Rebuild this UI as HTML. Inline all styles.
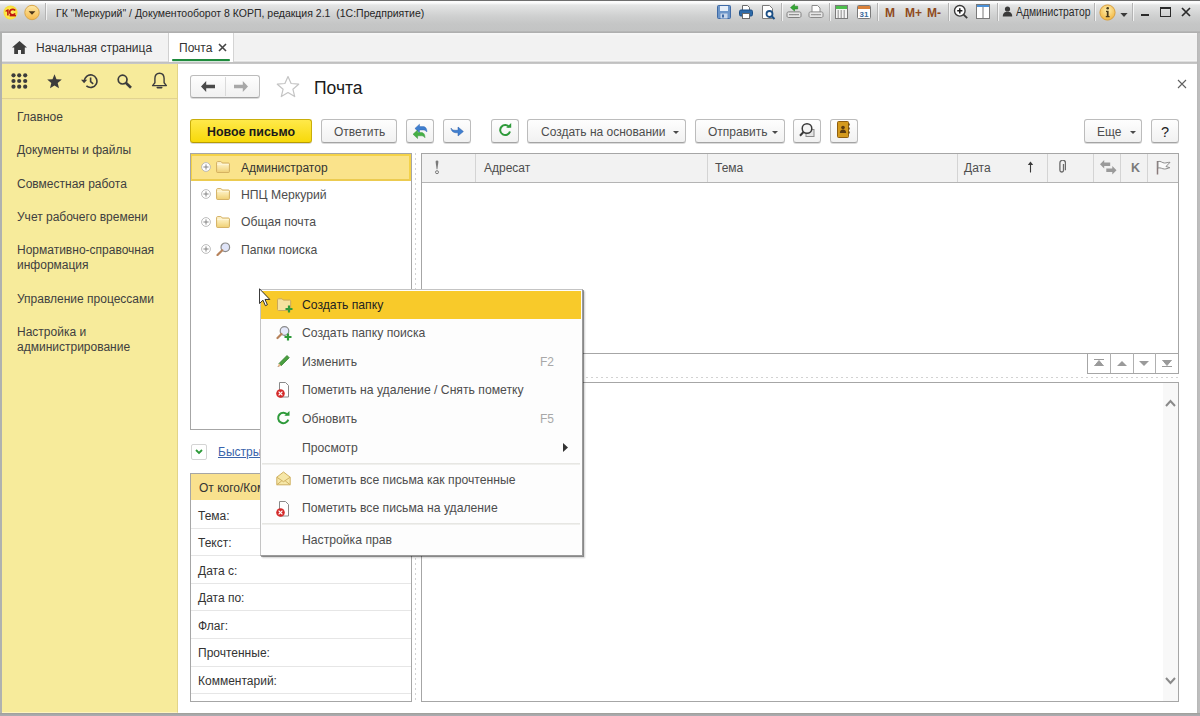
<!DOCTYPE html>
<html><head><meta charset="utf-8">
<style>
*{margin:0;padding:0;box-sizing:border-box}
html,body{width:1200px;height:716px;overflow:hidden;background:#fff}
body{position:relative;font-family:"Liberation Sans",sans-serif;font-size:12px;color:#4d4d4d}
.a{position:absolute}
.t{position:absolute;white-space:nowrap;line-height:14px}
/* title bar */
#tb{left:0;top:0;width:1200px;height:33px;background:linear-gradient(#6e6e6e 0,#6e6e6e 1px,#fcfcfc 1px,#fbfbfb 3px,#e4e5e5 5px,#cfd0d0 16px,#c5c6c6 24px,#c3c4c4 31px,#a9a9a9 32px,#b5b5b5 33px)}
#tabs{left:0;top:33px;width:1200px;height:31px;background:linear-gradient(#f8f8f8 0,#f2f2f2 3px,#f2f2f2 27px,#fafafa 28px,#c4c4c4 29px,#bdbdbd 30px,#d0d0d0 31px)}
.sep{position:absolute;width:1px;background:#b4b4b4;box-shadow:1px 0 0 rgba(255,255,255,.7)}
/* window borders */
#bl{left:0;top:33px;width:2px;height:683px;background:#b0b2b0}
#br{left:1197px;top:33px;width:3px;height:683px;background:linear-gradient(90deg,#b4b4b4,#bdbdbd 1px,#bebebe)}
#bb{left:0;top:713px;width:1200px;height:3px;background:linear-gradient(#9c9c94 0,#a6a6a6 1px,#acacb2 3px)}
/* left panel */
#lp{left:2px;top:64px;width:176px;height:649px;background:#f7eb9b;border-right:1px solid #e2d488;border-bottom:1px solid #fff4c0}
#lp .t{color:#404040;font-size:12px}
/* buttons */
.btn{position:absolute;height:24px;border:1px solid #bcbcbc;border-bottom-color:#a4a4a4;border-radius:3px;background:linear-gradient(#fefefe,#f1f1f1);box-shadow:0 1px 0 rgba(0,0,0,.14)}
.btn .t{color:#4d4d4d;line-height:23px}
.grid{position:absolute;border:1px solid #a6a6a6}
.dotv{position:absolute;width:1px;background:repeating-linear-gradient(#d2d2d2 0 2px,transparent 2px 5px)}
.doth{position:absolute;height:1px;background:repeating-linear-gradient(90deg,#d2d2d2 0 2px,transparent 2px 5px)}
.menu .t{color:#4d4d4d}
</style></head><body>

<!-- TITLE BAR -->
<div id="tb" class="a"></div>
<div id="tabs" class="a"></div>
<div id="bl" class="a"></div>
<div id="br" class="a"></div>
<div id="bb" class="a"></div>


<!-- title bar content -->
<svg class="a" style="left:3px;top:5px" width="16" height="16" viewBox="0 0 16 16">
 <defs><radialGradient id="g1c" cx="50%" cy="55%" r="55%"><stop offset="0" stop-color="#fff27a"/><stop offset=".7" stop-color="#fde640"/><stop offset="1" stop-color="#f6d820" stop-opacity=".85"/></radialGradient></defs>
 <circle cx="7.5" cy="7.5" r="7" fill="url(#g1c)"/>
 <path d="M2.6 5.4l2.2-1.2h.9v6.2H4.1V6.3l-1.5.6z" fill="#c01a10"/>
 <path d="M12.2 5.6a3 2.8 0 1 0 0 3" fill="none" stroke="#c01a10" stroke-width="1.7"/>
 <rect x="6.6" y="10" width="6.4" height="1.4" fill="#c01a10"/>
</svg>
<svg class="a" style="left:24px;top:4px" width="16" height="17" viewBox="0 0 16 17">
 <defs><linearGradient id="gdd" x1="0" y1="0" x2="0" y2="1"><stop offset="0" stop-color="#fde9a8"/><stop offset="1" stop-color="#f6b94a"/></linearGradient></defs>
 <circle cx="8" cy="8.5" r="7.2" fill="url(#gdd)" stroke="#d9a64a" stroke-width="1"/>
 <path d="M4.6 7.2h6.8l-3.4 3.6z" fill="#4a3418"/>
</svg>
<div class="sep" style="left:45px;top:3px;height:17px"></div>
<div class="t" id="wtitle" style="left:56px;top:5.5px;font-size:11.5px;color:#262626;transform-origin:0 0;transform:scaleX(.913)">ГК "Меркурий" / Документооборот 8 КОРП, редакция 2.1&nbsp; (1С:Предприятие)</div>

<!-- toolbar icons -->
<svg class="a" style="left:717px;top:5px" width="14" height="14" viewBox="0 0 14 14">
 <rect x=".5" y=".5" width="13" height="13" rx="1" fill="#6c95c8" stroke="#3f6aa6"/>
 <rect x="3" y="1" width="8" height="5" fill="#e6eef8"/>
 <rect x="3.5" y="8.5" width="7" height="5" fill="#c7d6ea"/>
 <rect x="5" y="9.5" width="2" height="3" fill="#3f6aa6"/>
</svg>
<svg class="a" style="left:739px;top:5px" width="14" height="14" viewBox="0 0 14 14">
 <path d="M3.5 .5h5l2 2v3h-7z" fill="#fff" stroke="#6a6a6a"/>
 <rect x=".5" y="5" width="13" height="6" rx="1.5" fill="#2e6aa8" stroke="#1d4f86"/>
 <rect x="3.5" y="8.5" width="7" height="5" fill="#fff" stroke="#6a6a6a"/>
</svg>
<svg class="a" style="left:762px;top:5px" width="14" height="15" viewBox="0 0 14 15">
 <path d="M.5 .5h7l3 3v10H.5z" fill="#fff" stroke="#7a7a7a"/>
 <circle cx="7.5" cy="9" r="3" fill="none" stroke="#1b4f86" stroke-width="1.8"/>
 <path d="M9.5 11l3 3" stroke="#1b4f86" stroke-width="2"/>
</svg>
<div class="sep" style="left:781px;top:3px;height:18px"></div>
<svg class="a" style="left:786px;top:3px" width="16" height="16" viewBox="0 0 16 16">
 <path d="M1 10.5c0-1 .6-1.6 1.6-1.6h10.8c1 0 1.6.6 1.6 1.6v2.4c0 1-.6 1.6-1.6 1.6H2.6c-1 0-1.6-.6-1.6-1.6z" fill="#e6e6e6" stroke="#7f7f7f"/>
 <path d="M3 11.7h3.2M9.8 11.7H13M6 11.7h4" stroke="#7f7f7f" stroke-width="1"/>
 <path d="M4.5 4.6L8.5 1.2v2h3.2v2.8H8.5v2z" fill="#34a834" stroke="#1f7a1f" stroke-width=".5"/>
</svg>
<svg class="a" style="left:808px;top:3px" width="16" height="16" viewBox="0 0 16 16">
 <path d="M4 2.5h5.5l2.5 2.5v4.5H4z" fill="#fff" stroke="#8a8a8a"/>
 <path d="M1 10.5c0-1 .6-1.6 1.6-1.6h10.8c1 0 1.6.6 1.6 1.6v2.4c0 1-.6 1.6-1.6 1.6H2.6c-1 0-1.6-.6-1.6-1.6z" fill="#e6e6e6" stroke="#8a8a8a"/>
 <path d="M3 11.7h3.2M9.8 11.7H13M6 11.7h4" stroke="#8a8a8a" stroke-width="1"/>
</svg>
<div class="sep" style="left:829px;top:3px;height:18px"></div>
<svg class="a" style="left:835px;top:5px" width="13" height="14" viewBox="0 0 13 14">
 <rect x=".5" y=".5" width="12" height="13" fill="#f4f4f4" stroke="#7a7a7a"/>
 <rect x="1" y="1" width="11" height="3" fill="#4dbf4d"/>
 <path d="M2.5 6h1.5M5.5 6h1.5M8.5 6h1.5M2.5 8h1.5M5.5 8h1.5M8.5 8h1.5M2.5 10h1.5M5.5 10h1.5M8.5 10h1.5M2.5 12h1.5M5.5 12h1.5M8.5 12h1.5" stroke="#6a6a6a"/>
</svg>
<svg class="a" style="left:857px;top:4px" width="14" height="15" viewBox="0 0 14 15">
 <rect x=".5" y="1.5" width="13" height="13" rx="1" fill="#fff" stroke="#7a7a7a"/>
 <rect x="1" y="2" width="12" height="3" fill="#d9813a"/>
 <text x="7" y="13" font-family="Liberation Sans" font-size="8" text-anchor="middle" fill="#3d6a9a" font-weight="bold">31</text>
</svg>
<div class="sep" style="left:877px;top:3px;height:18px"></div>
<div class="t" style="left:885px;top:6px;font-size:12px;font-weight:bold;color:#8f4a1c">M</div>
<div class="t" style="left:905px;top:6px;font-size:12px;font-weight:bold;color:#8f4a1c">M+</div>
<div class="t" style="font-size:12.2px;left:927px;top:6px;font-size:12px;font-weight:bold;color:#8f4a1c">M-</div>
<div class="sep" style="left:948px;top:3px;height:18px"></div>
<svg class="a" style="left:953px;top:4px" width="16" height="16" viewBox="0 0 16 16">
 <circle cx="6.8" cy="6.8" r="5.3" fill="#fff" stroke="#3a3a3a" stroke-width="1.4"/>
 <path d="M4.2 6.8h5.2M6.8 4.2v5.2" stroke="#1a1a1a" stroke-width="1.5"/>
 <path d="M10.6 10.6l3.6 3.6" stroke="#3a3a3a" stroke-width="1.8"/>
</svg>
<svg class="a" style="left:976px;top:4px" width="14" height="15" viewBox="0 0 14 15">
 <rect x=".5" y=".5" width="13" height="14" fill="#fff" stroke="#7a7a7a"/>
 <rect x="1" y="1" width="12" height="2" fill="#4a90d8"/>
 <path d="M7 3v11.5" stroke="#7a7a7a"/>
</svg>
<div class="sep" style="left:997px;top:3px;height:18px"></div>
<svg class="a" style="left:1002px;top:6px" width="11" height="11" viewBox="0 0 11 11">
 <circle cx="5.5" cy="3" r="2.6" fill="#3a3a3a"/>
 <path d="M.8 10.5c0-3.6 2-4.8 4.7-4.8s4.7 1.2 4.7 4.8z" fill="#3a3a3a"/>
</svg>
<div class="t" id="admin" style="left:1016px;top:5px;font-size:12px;color:#2a2a2a;transform-origin:0 0;transform:scaleX(.86)">Администратор</div>
<div class="sep" style="left:1094px;top:3px;height:18px"></div>
<svg class="a" style="left:1099px;top:4px" width="17" height="17" viewBox="0 0 17 17">
 <defs><radialGradient id="ginf" cx="50%" cy="35%" r="65%"><stop offset="0" stop-color="#fff0b0"/><stop offset="1" stop-color="#f2b640"/></radialGradient></defs>
 <circle cx="8.5" cy="8.5" r="7.6" fill="url(#ginf)" stroke="#d9a040"/>
 <circle cx="8.7" cy="4.3" r="1.3" fill="#4a3a1a"/>
 <path d="M7 6.8h2.6v5.2h1v1.2H6.8V12h1V8H7z" fill="#4a3a1a"/>
</svg>
<svg class="a" style="left:1120px;top:13px" width="8" height="4" viewBox="0 0 9 5"><path d="M0 0h9L4.5 5z" fill="#3a3a3a"/></svg>
<div class="sep" style="left:1132px;top:3px;height:18px"></div>
<div class="a" style="left:1141px;top:14px;width:8px;height:2px;background:#2a2a2a"></div>
<div class="a" style="left:1160px;top:7px;width:11px;height:10px;border:1.5px solid #2a2a2a;border-top-width:2px"></div>
<svg class="a" style="left:1181px;top:7px" width="10" height="10" viewBox="0 0 10 10"><path d="M1 1l8 8M9 1l-8 8" stroke="#2a2a2a" stroke-width="1.7"/></svg>

<!-- tabs -->
<svg class="a" style="left:12px;top:41px" width="15" height="13" viewBox="0 0 15 13">
 <path d="M7.5 0L0 6.5h2.2V13h3.8V9h3v4h3.8V6.5H15z" fill="#3e3e3e"/>
</svg>
<div class="t" style="left:36px;top:41px;color:#333">Начальная страница</div>
<div class="a" style="left:168px;top:33px;width:1px;height:29px;background:#d0d0d0"></div>
<div class="a" style="left:169px;top:33px;width:65px;height:29px;background:#fff;border-right:1px solid #d4d4d4"></div>
<div class="a" style="left:172px;top:59px;width:58px;height:2px;background:#1e8a3c;border-radius:1px;box-shadow:0 .5px 0 rgba(30,138,60,.4)"></div>
<div class="t" style="left:179px;top:41px;color:#333">Почта</div>
<svg class="a" style="left:218px;top:43px" width="9" height="9" viewBox="0 0 9 9"><path d="M1 1l7 7M8 1l-7 7" stroke="#444" stroke-width="1.6"/></svg>

<!-- LEFT PANEL -->
<div id="lp" class="a"></div>
<div id="lpc" style="position:absolute;left:0;top:0;color:#404040">
<!-- left panel icons -->
<svg class="a" style="left:11px;top:73px" width="17" height="16" viewBox="0 0 17 16" fill="#3c3c3c">
 <circle cx="2.5" cy="2.3" r="2.1"/><circle cx="8.2" cy="2.3" r="2.1"/><circle cx="14.2" cy="2.3" r="2.1"/>
 <circle cx="2.5" cy="8" r="2.1"/><circle cx="8.2" cy="8" r="2.1"/><circle cx="14.2" cy="8" r="2.1"/>
 <circle cx="2.5" cy="13.7" r="2.1"/><circle cx="8.2" cy="13.7" r="2.1"/><circle cx="14.2" cy="13.7" r="2.1"/>
</svg>
<svg class="a" style="left:47px;top:74px" width="15" height="15" viewBox="0 0 15 15">
 <path d="M7.5 .3l2 4.9 5.3.4-4.1 3.4 1.3 5.2-4.5-2.8-4.5 2.8 1.3-5.2L.2 5.6l5.3-.4z" fill="#3c3c3c"/>
</svg>
<svg class="a" style="left:80px;top:73px" width="18" height="16" viewBox="0 0 18 16">
 <path d="M4.3 8.3A6.3 6.3 0 1 1 6.4 12.9" fill="none" stroke="#3c3c3c" stroke-width="1.6"/>
 <path d="M1 6.8h6.2L4.1 10.3z" fill="#3c3c3c"/>
 <path d="M10.6 4.6v4l2.6 2.2" fill="none" stroke="#3c3c3c" stroke-width="1.6"/>
</svg>
<svg class="a" style="left:117px;top:74px" width="16" height="15" viewBox="0 0 16 15">
 <circle cx="5.6" cy="5.6" r="4.4" fill="none" stroke="#3c3c3c" stroke-width="1.7"/>
 <path d="M8.8 8.8l5.2 5" stroke="#3c3c3c" stroke-width="2.6"/>
</svg>
<svg class="a" style="left:151px;top:72px" width="17" height="18" viewBox="0 0 17 18">
 <path d="M8.5 1.2c-3.2 0-4.6 2.4-4.6 5.4v4.2L1.6 13.6h13.8l-2.3-2.8V6.6c0-3-1.4-5.4-4.6-5.4z" fill="none" stroke="#3c3c3c" stroke-width="1.4" stroke-linejoin="round"/>
 <path d="M6.3 15.6h4.4" stroke="#3c3c3c" stroke-width="1.6" stroke-linecap="round"/>
</svg>
<div class="a" style="left:2px;top:98px;width:175px;height:2px;background:linear-gradient(#d9ca84,#fbf0b4)"></div>
<div class="t" style="left:17px;top:110px">Главное</div>
<div class="t" style="left:17px;top:143px">Документы и файлы</div>
<div class="t" style="left:17px;top:177px">Совместная работа</div>
<div class="t" style="left:17px;top:210px">Учет рабочего времени</div>
<div class="t" style="left:17px;top:243px">Нормативно-справочная</div>
<div class="t" style="left:17px;top:258px">информация</div>
<div class="t" style="left:17px;top:292px">Управление процессами</div>
<div class="t" style="left:17px;top:325px">Настройка и</div>
<div class="t" style="left:17px;top:340px">администрирование</div>
</div>


<!-- MAIN HEADER -->
<div class="btn" style="left:190px;top:75px;width:70px;height:23px"></div>
<div class="a" style="left:225px;top:77px;width:1px;height:19px;background:#dadada"></div>
<svg class="a" style="left:201px;top:81px" width="14" height="11" viewBox="0 0 14 11"><path d="M0 5.5L5.2 0v3.8H14v3.4H5.2V11z" fill="#4a4a4a"/></svg>
<svg class="a" style="left:234px;top:81px" width="14" height="11" viewBox="0 0 14 11"><path d="M14 5.5L8.8 0v3.8H0v3.4h8.8V11z" fill="#a8a8a8"/></svg>
<svg class="a" style="left:276px;top:75px" width="24" height="23" viewBox="0 0 24 23">
 <path d="M12 1.5l3.1 7 7.6.7-5.8 5 1.8 7.4L12 17.6l-6.7 4 1.8-7.4-5.8-5 7.6-.7z" fill="none" stroke="#c4c4c4" stroke-width="1.2" stroke-linejoin="round"/>
</svg>
<div class="t" style="left:314px;top:78px;font-size:17.5px;line-height:21px;color:#1a1a1a">Почта</div>
<svg class="a" style="left:1177px;top:79px" width="10" height="10" viewBox="0 0 10 10"><path d="M1 1l8 8M9 1l-8 8" stroke="#606060" stroke-width="1.1"/></svg>

<!-- TOOLBAR -->
<div class="a" style="left:190px;top:119px;width:122px;height:24px;border:1px solid #c9ae0a;border-bottom-color:#b89c00;border-radius:3px;background:linear-gradient(#ffe94a,#f7d90a);box-shadow:0 1px 0 rgba(0,0,0,.15)"></div>
<div class="t" style="left:207px;top:125px;font-weight:bold;font-size:12.4px;color:#1a1a1a">Новое письмо</div>
<div class="btn" style="left:321px;top:119px;width:76px"></div>
<div class="t" style="left:334px;top:125px">Ответить</div>
<div class="btn" style="left:406px;top:119px;width:28px"></div>
<svg class="a" style="left:410px;top:121px" width="20" height="19" viewBox="0 0 20 19">
 <path transform="translate(4.9 3.2)" d="M0 4.2L4.6 0V2.4H8C10.5 2.4 12 4 12 7.8 11 6.4 9.8 5.8 8 5.8H4.6V8.6Z" fill="#3f7fd0" stroke="#2c5ea8" stroke-width=".4"/>
 <path transform="translate(3 9)" d="M0 4.2L4.6 0V2.4H8C10.5 2.4 12 4 12 7.8 11 6.4 9.8 5.8 8 5.8H4.6V8.6Z" fill="#45b045" stroke="#2a8a30" stroke-width=".4"/>
</svg>
<div class="btn" style="left:443px;top:119px;width:28px"></div>
<svg class="a" style="left:450px;top:126px" width="15" height="11" viewBox="0 0 15 11">
 <path d="M1 2C2 4.5 4 4.3 8 4.3V1L13.4 5.5 8 10V6.8C4.5 6.8 1.5 6.5 1 2Z" fill="#3f7fd0" stroke="#2c5ea8" stroke-width=".5"/>
</svg>
<div class="btn" style="left:491px;top:119px;width:28px"></div>
<svg class="a" style="left:498px;top:123px" width="14" height="14" viewBox="0 0 14 14">
 <path d="M11.3 4.2A5 5 0 1 0 12 8.5" fill="none" stroke="#2e9a3a" stroke-width="2"/>
 <path d="M8.2 4.8h5V0z" fill="#2e9a3a"/>
</svg>
<div class="btn" style="left:527px;top:119px;width:159px"></div>
<div class="t" style="left:541px;top:125px">Создать на основании</div>
<svg class="a" style="left:673px;top:131px" width="6" height="3" viewBox="0 0 6 3"><path d="M0 0h6L3 3z" fill="#4a4a4a"/></svg>
<div class="btn" style="left:695px;top:119px;width:90px"></div>
<div class="t" style="left:708px;top:125px">Отправить</div>
<svg class="a" style="left:772px;top:131px" width="6" height="3" viewBox="0 0 6 3"><path d="M0 0h6L3 3z" fill="#4a4a4a"/></svg>
<div class="btn" style="left:793px;top:119px;width:28px"></div>
<svg class="a" style="left:799px;top:122px" width="16" height="16" viewBox="0 0 16 16">
 <rect x="7" y="7.5" width="8" height="7" fill="#e4e4e4" stroke="#8a8a8a"/>
 <circle cx="8" cy="6.5" r="4.8" fill="#f4f4f4" stroke="#3a3a3a" stroke-width="1.5"/>
 <path d="M4.5 10l-3.5 3.8" stroke="#3a3a3a" stroke-width="2"/>
</svg>
<div class="btn" style="left:830px;top:119px;width:28px"></div>
<svg class="a" style="left:837px;top:121px" width="14" height="17" viewBox="0 0 14 17">
 <rect x=".5" y=".5" width="11" height="16" rx="1" fill="#d49a1e" stroke="#8f5f10"/>
 <path d="M12 2.5v2M12 6.5v2M12 10.5v2" stroke="#6a4a10" stroke-width="1.5"/>
 <circle cx="6" cy="6.5" r="1.8" fill="#5a3a10"/>
 <path d="M2.8 12c.3-2.4 1.5-3.4 3.2-3.4s2.9 1 3.2 3.4z" fill="#5a3a10"/>
</svg>
<div class="btn" style="left:1084px;top:119px;width:58px"></div>
<div class="t" style="left:1097px;top:125px">Еще</div>
<svg class="a" style="left:1130px;top:131px" width="6" height="3" viewBox="0 0 6 3"><path d="M0 0h6L3 3z" fill="#4a4a4a"/></svg>
<div class="btn" style="left:1151px;top:119px;width:28px"></div>
<div class="t" style="left:1161px;top:124px;font-size:14.5px;line-height:16px;color:#222">?</div>


<!-- TREE -->
<div class="a" style="left:190px;top:153px;width:222px;height:277px;border:1px solid #a6a6a6;background:#fff"></div>
<div class="a" style="left:191px;top:154px;width:220px;height:27px;background:#fae38b;border:2px solid #f4d248;border-left-width:1px;border-bottom-color:#eccb50"></div>
<svg width="0" height="0" style="position:absolute">
 <defs>
  <linearGradient id="gfold" x1="0" y1="0" x2="0" y2="1"><stop offset="0" stop-color="#fff6d6"/><stop offset=".5" stop-color="#f9e6a8"/><stop offset="1" stop-color="#efcf72"/></linearGradient>
  <symbol id="plus" viewBox="0 0 10 10"><circle cx="5" cy="5" r="4.4" fill="#fff" stroke="#b4b4b4" stroke-width=".9"/><path d="M2.4 5h5.2M5 2.4v5.2" stroke="#7a7a7a" stroke-width=".9"/></symbol>
  <symbol id="fold" viewBox="0 0 14 12"><path d="M.6 10.6V1.6C.6 1 1 .6 1.6.6h3.2c.4 0 .6.2.8.5l.6.9h6.2c.6 0 1 .4 1 1v7.6c0 .6-.4 1-1 1H1.6c-.6 0-1-.4-1-1z" fill="url(#gfold)" stroke="#d2ae5e" stroke-width="1"/><path d="M1 3.6h12" stroke="#fff8dc" stroke-width=".8"/></symbol>
 </defs>
</svg>
<svg class="a" style="left:201px;top:162px" width="10" height="10"><use href="#plus"/></svg>
<svg class="a" style="left:216px;top:161px" width="14" height="12"><use href="#fold"/></svg>
<div class="t" style="left:241px;top:161px;color:#333">Администратор</div>
<svg class="a" style="left:201px;top:189px" width="10" height="10"><use href="#plus"/></svg>
<svg class="a" style="left:216px;top:188px" width="14" height="12"><use href="#fold"/></svg>
<div class="t" style="font-size:12.2px;left:241px;top:188px;color:#4d4d4d">НПЦ Меркурий</div>
<svg class="a" style="left:201px;top:217px" width="10" height="10"><use href="#plus"/></svg>
<svg class="a" style="left:216px;top:216px" width="14" height="12"><use href="#fold"/></svg>
<div class="t" style="font-size:12.2px;left:241px;top:215px;color:#4d4d4d">Общая почта</div>
<svg class="a" style="left:201px;top:244px" width="10" height="10"><use href="#plus"/></svg>
<svg class="a" style="left:216px;top:242px" width="15" height="14" viewBox="0 0 15 14">
 <circle cx="9.3" cy="5.3" r="4.3" fill="#dfe4f8" stroke="#8a8a8a" stroke-width="1.2"/>
 <path d="M6.3 8.3L1.5 13" stroke="#b7825a" stroke-width="2.2" stroke-linecap="round"/>
</svg>
<div class="t" style="font-size:12.2px;left:241px;top:243px;color:#4d4d4d">Папки поиска</div>

<!-- splitters -->
<div class="dotv" style="left:415px;top:153px;height:548px"></div>
<div class="doth" style="left:421px;top:377px;width:758px"></div>

<!-- TABLE -->
<div class="a" style="left:421px;top:153px;width:758px;height:201px;border:1px solid #a6a6a6;background:#fff"></div>
<div class="a" style="left:422px;top:154px;width:756px;height:29px;background:#f2f2f2;border-bottom:1px solid #b4b4b4"></div>
<div class="a" style="left:475px;top:154px;width:1px;height:28px;background:#d4d4d4"></div>
<div class="a" style="left:707px;top:154px;width:1px;height:28px;background:#d4d4d4"></div>
<div class="a" style="left:957px;top:154px;width:1px;height:28px;background:#d4d4d4"></div>
<div class="a" style="left:1047px;top:154px;width:1px;height:28px;background:#d4d4d4"></div>
<div class="a" style="left:1093px;top:154px;width:1px;height:28px;background:#d4d4d4"></div>
<div class="a" style="left:1120px;top:154px;width:1px;height:28px;background:#d4d4d4"></div>
<div class="a" style="left:1147px;top:154px;width:1px;height:28px;background:#d4d4d4"></div>
<svg class="a" style="left:434px;top:160px" width="6" height="15" viewBox="0 0 6 15">
 <path d="M1.6 1.8a1.4 1.4 0 0 1 2.8 0L3.4 9.2h-.8z" fill="#7a7a7a"/>
 <circle cx="3" cy="12.2" r="1.5" fill="none" stroke="#7a7a7a" stroke-width="1"/>
</svg>
<div class="t" style="left:484px;top:161px">Адресат</div>
<div class="t" style="left:715px;top:161px">Тема</div>
<div class="t" style="left:964px;top:161px">Дата</div>
<svg class="a" style="left:1027px;top:161px" width="7" height="12" viewBox="0 0 7 12"><path d="M3.5 2V11.5" stroke="#3a3a3a" stroke-width="1.1"/><path d="M.8 4L3.5 .6 6.2 4z" fill="#3a3a3a"/></svg>
<svg class="a" style="left:1058px;top:160px" width="8" height="14" viewBox="0 0 8 14">
 <path d="M5.5 4v6.2a1.8 1.8 0 0 1-3.6 0V3a2.8 2.8 0 0 1 5.6 0v7.2" fill="none" stroke="#6a6a6a" stroke-width="1.3"/>
</svg>
<svg class="a" style="left:1100px;top:160px" width="17" height="15" viewBox="0 0 17 15">
 <path d="M0 4.3L4.2 0v2.6h6v3.4h-6v2.6z" fill="#9a9a9a"/>
 <path d="M16.5 10.3l-4.2 4.3v-2.6h-6V8.6h6V6z" fill="#9a9a9a"/>
</svg>
<div class="t" style="left:1131px;top:161px;font-size:12.5px;font-weight:bold;color:#7a7a7a">K</div>
<svg class="a" style="left:1156px;top:160px" width="15" height="15" viewBox="0 0 15 15">
 <path d="M1.5 1v13.5" stroke="#8a7a7a" stroke-width="1.5"/>
 <path d="M2 1.5c3-.8 4 1.5 6.5 1.5 2 0 3-.7 5.5-.7L10 6.5l3.8 1.2C11.5 8.3 10.5 9 8.5 9 6 9 5 7.3 2 8z" fill="#fafafa" stroke="#8a8a8a" stroke-width="1"/>
</svg>
<!-- scroll buttons -->
<div class="a" style="left:1087px;top:354px;width:92px;height:20px;border:1px solid #a6a6a6;border-top:none;background:#fff"></div>
<div class="a" style="left:1110px;top:353px;width:1px;height:20px;background:#b0b0b0"></div>
<div class="a" style="left:1133px;top:353px;width:1px;height:20px;background:#b0b0b0"></div>
<div class="a" style="left:1155px;top:353px;width:1px;height:20px;background:#b0b0b0"></div>
<svg class="a" style="left:1094px;top:359px" width="10" height="7" viewBox="0 0 10 7"><path d="M0 .5h10M.5 7L5 1.5 9.5 7z" stroke="#9a9a9a" fill="#9a9a9a"/></svg>
<svg class="a" style="left:1117px;top:361px" width="10" height="5" viewBox="0 0 10 5"><path d="M0 5L5 0l5 5z" fill="#9a9a9a"/></svg>
<svg class="a" style="left:1139px;top:361px" width="10" height="5" viewBox="0 0 10 5"><path d="M0 0l5 5 5-5z" fill="#9a9a9a"/></svg>
<svg class="a" style="left:1162px;top:360px" width="10" height="7" viewBox="0 0 10 7"><path d="M0 6.5h10M.5 0L5 5.5 9.5 0z" stroke="#9a9a9a" fill="#9a9a9a"/></svg>

<!-- PREVIEW -->
<div class="a" style="left:421px;top:382px;width:758px;height:320px;border:1px solid #a6a6a6;background:#fff"></div>
<div class="a" style="left:1163px;top:383px;width:15px;height:318px;background:#f8f8f8"></div>
<svg class="a" style="left:1165px;top:399px" width="11" height="8" viewBox="0 0 11 8"><path d="M1 7l4.5-5 4.5 5" fill="none" stroke="#8a8a8a" stroke-width="2"/></svg>
<svg class="a" style="left:1165px;top:677px" width="11" height="8" viewBox="0 0 11 8"><path d="M1 1l4.5 5 4.5-5" fill="none" stroke="#8a8a8a" stroke-width="2"/></svg>

<!-- QUICK FILTER -->
<div class="a" style="left:191px;top:444px;width:16px;height:16px;border:1px solid #d4d4d4;border-radius:2px;background:#fff"></div>
<svg class="a" style="left:195px;top:449px" width="8" height="6" viewBox="0 0 8 6"><path d="M1 1l3 3 3-3" fill="none" stroke="#2e9a3a" stroke-width="1.8"/></svg>
<div class="t" style="left:218px;top:445px;color:#3a64ac;text-decoration:underline">Быстрый отбор</div>

<!-- FILTER PANEL -->
<div class="a" style="left:190px;top:473px;width:222px;height:229px;border:1px solid #a6a6a6;background:#fff"></div>
<div class="a" style="left:191px;top:474px;width:220px;height:26px;background:#f9e18e"></div>
<div class="t" style="left:199px;top:481px;color:#333">От кого/Кому</div>
<div class="a" style="left:191px;top:528px;width:220px;height:1px;background:#e6e6e6"></div>
<div class="a" style="left:191px;top:555px;width:220px;height:1px;background:#e6e6e6"></div>
<div class="a" style="left:191px;top:583px;width:220px;height:1px;background:#e6e6e6"></div>
<div class="a" style="left:191px;top:610px;width:220px;height:1px;background:#e6e6e6"></div>
<div class="a" style="left:191px;top:638px;width:220px;height:1px;background:#e6e6e6"></div>
<div class="a" style="left:191px;top:666px;width:220px;height:1px;background:#e6e6e6"></div>
<div class="a" style="left:191px;top:693px;width:220px;height:1px;background:#e6e6e6"></div>
<div class="t" style="left:198px;top:509px;color:#333">Тема:</div>
<div class="t" style="left:198px;top:536px;color:#333">Текст:</div>
<div class="t" style="left:198px;top:564px;color:#333">Дата с:</div>
<div class="t" style="left:198px;top:591px;color:#333">Дата по:</div>
<div class="t" style="left:198px;top:619px;color:#333">Флаг:</div>
<div class="t" style="left:198px;top:646px;color:#333">Прочтенные:</div>
<div class="t" style="left:198px;top:674px;color:#333">Комментарий:</div>


<!-- CONTEXT MENU -->
<div class="a" style="left:260px;top:289px;width:323px;height:267px;background:#fdfdfd;border:1px solid #c4c4c4;border-right-color:#9a9a9a;border-bottom-color:#9a9a9a;box-shadow:1px 1px 0 rgba(0,0,0,.35),2px 2px 1.5px rgba(0,0,0,.18)"></div>
<div class="a" style="left:261px;top:291px;width:320px;height:28px;background:#f8ca2a"></div>
<div class="a" style="left:262px;top:463px;width:318px;height:2px;background:linear-gradient(#e2e2de,#f4f4f2)"></div>
<div class="a" style="left:262px;top:523px;width:318px;height:2px;background:linear-gradient(#e2e2de,#f4f4f2)"></div>
<svg class="a" style="left:277px;top:298px" width="16" height="15" viewBox="0 0 16 15">
 <path d="M.5 3V1.8c0-.6.4-1 1-1h3.6l1.2 1.3h6.4c.6 0 1 .4 1 1v8.4c0 .6-.4 1-1 1H1.5c-.6 0-1-.4-1-1z" fill="#f5e2a0" stroke="#c9a85a"/>
 <path d="M12 7.5v7M8.5 11h7" stroke="#2e9a3a" stroke-width="2.2"/>
</svg>
<div class="t" style="font-size:12.2px;left:302px;top:298px;color:#222">Создать папку</div>
<svg class="a" style="left:276px;top:325px" width="16" height="16" viewBox="0 0 16 16">
 <circle cx="8.5" cy="6" r="4.3" fill="#e4e8fa" stroke="#8a8a8a" stroke-width="1.2"/>
 <path d="M5.5 9L1.5 13" stroke="#b7825a" stroke-width="2.2" stroke-linecap="round"/>
 <path d="M12 8.5v7M8.5 12h7" stroke="#2e9a3a" stroke-width="2.2"/>
</svg>
<div class="t" style="font-size:12.2px;left:302px;top:326px">Создать папку поиска</div>
<svg class="a" style="left:276px;top:353px" width="15" height="16" viewBox="0 0 15 16">
 <path d="M3 10.5L11 2.5l2.2 2.2-8 8z" fill="#4aa040" stroke="#2e7a2a" stroke-width=".8"/>
 <path d="M3 10.5l2.2 2.2-3.6 1.4z" fill="#e0b080"/>
 <path d="M1.6 14.1l.9-.4-.5-.5z" fill="#333"/>
</svg>
<div class="t" style="font-size:12.2px;left:302px;top:355px">Изменить</div>
<div class="t" style="left:540px;top:355px;color:#a8a8a8">F2</div>
<svg class="a" style="left:275px;top:382px" width="16" height="17" viewBox="0 0 16 17">
 <path d="M4.5 .5h6l3 3v11.5h-9z" fill="#fff" stroke="#8a8a8a"/>
 <circle cx="5.5" cy="11.5" r="4.3" fill="#d42a2a"/>
 <path d="M3.6 9.6l3.8 3.8M7.4 9.6l-3.8 3.8" stroke="#fff" stroke-width="1.2"/>
</svg>
<div class="t" style="font-size:12.2px;left:302px;top:383px">Пометить на удаление / Снять пометку</div>
<svg class="a" style="left:276px;top:411px" width="14" height="14" viewBox="0 0 14 14">
 <path d="M11.5 3.8A5.2 5.2 0 1 0 12.3 8.6" fill="none" stroke="#2e9a3a" stroke-width="2"/>
 <path d="M8.3 4.8h5.2V0z" fill="#2e9a3a"/>
</svg>
<div class="t" style="font-size:12.2px;left:302px;top:412px">Обновить</div>
<div class="t" style="left:540px;top:412px;color:#a8a8a8">F5</div>
<div class="t" style="font-size:12.2px;left:302px;top:441px">Просмотр</div>
<svg class="a" style="left:563px;top:443px" width="5" height="9" viewBox="0 0 5 9"><path d="M0 0l5 4.5L0 9z" fill="#333"/></svg>
<svg class="a" style="left:276px;top:471px" width="15" height="15" viewBox="0 0 15 15">
 <path d="M.8 6.2L7.5 1l6.7 5.2v7.6H.8z" fill="#f6e7a8" stroke="#cfb060"/>
 <path d="M.8 6.2l6.7 4.5 6.7-4.5M.8 13.8l5-4M14.2 13.8l-5-4" fill="none" stroke="#cfb060"/>
</svg>
<div class="t" style="font-size:12.2px;left:302px;top:473px">Пометить все письма как прочтенные</div>
<svg class="a" style="left:275px;top:501px" width="16" height="17" viewBox="0 0 16 17">
 <path d="M4.5 .5h6l3 3v11.5h-9z" fill="#fff" stroke="#8a8a8a"/>
 <circle cx="5.5" cy="11.5" r="4.3" fill="#d42a2a"/>
 <path d="M3.6 9.6l3.8 3.8M7.4 9.6l-3.8 3.8" stroke="#fff" stroke-width="1.2"/>
</svg>
<div class="t" style="font-size:12.2px;left:302px;top:501px">Пометить все письма на удаление</div>
<div class="t" style="font-size:12.2px;left:302px;top:533px">Настройка прав</div>

<!-- CURSOR -->
<svg class="a" style="left:259px;top:288px" width="12" height="19" viewBox="0 0 13 20">
 <path d="M.5 .5v16l3.8-3.6 2.6 6 2.2-1-2.6-5.8h5.2z" fill="#fff" stroke="#222" stroke-width="1" stroke-linejoin="round"/>
</svg>

</body></html>
